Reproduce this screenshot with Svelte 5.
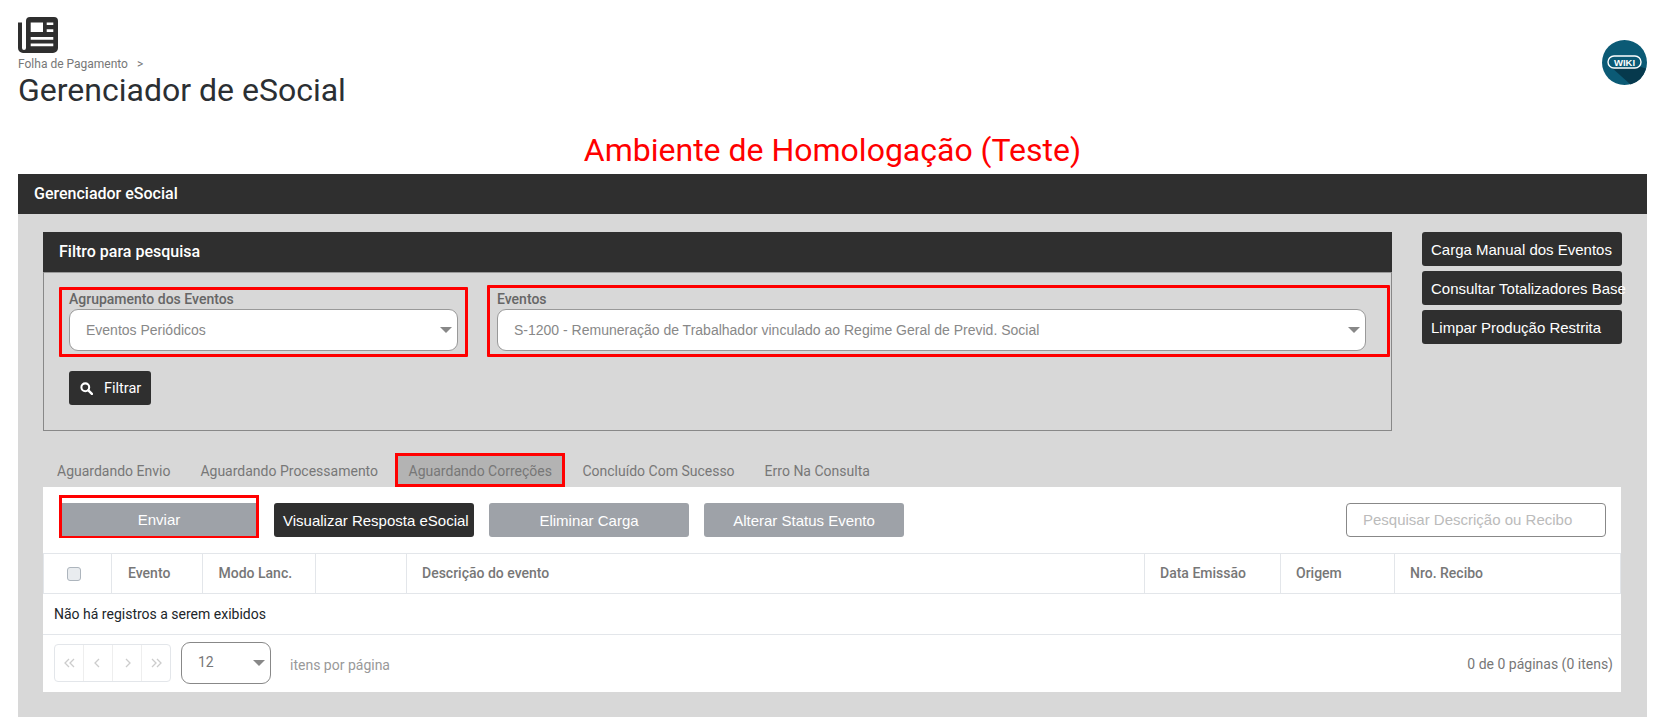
<script>
  const tabs = [
    { label: "Aguardando Envio" },
    { label: "Aguardando Processamento" },
    { label: "Aguardando Correções", active: true },
    { label: "Concluído Com Sucesso" },
    { label: "Erro Na Consulta" },
  ];
  const sideButtons = ["Carga Manual dos Eventos", "Consultar Totalizadores Base", "Limpar Produção Restrita"];
  const columns = [
    { label: "Evento", width: 90.5 },
    { label: "Modo Lanc.", width: 113.5 },
    { label: "", width: 91 },
    { label: "Descrição do evento", width: 738 },
    { label: "Data Emissão", width: 136 },
    { label: "Origem", width: 114 },
    { label: "Nro. Recibo", width: 226 },
  ];
  // chevrons do paginador
  const pager = [
    "M5 1L1 5l4 4M10 1L6 5l4 4",
    "M6 1L2 5l4 4",
    "M4 1l4 4-4 4",
    "M1 1l4 4-4 4M6 1l4 4-4 4",
  ];
</script>

<div class="page">
  <header class="top">
    <div class="heading">
      <svg class="news" viewBox="0 0 40 36" aria-hidden="true">
        <path fill="#2f2f2f" fill-rule="evenodd" d="M8 4a4 4 0 0 1 4-4h24a4 4 0 0 1 4 4v27a5 5 0 0 1-5 5H5a5 5 0 0 1-5-5V5.500h4V31a2 2 0 0 0 4 0z M12.700 5.500V15H25V5.500z M28.700 5.500V8h6.600V5.500z M28.700 12.300V15h6.600v-2.700z M12.700 20v2.700h22.600V20z M12.700 26.500v2.700h22.600v-2.700z" />
      </svg>
      <div class="crumb">Folha de Pagamento <span class="sep">&gt;</span></div>
      <h1>Gerenciador de eSocial</h1>
    </div>
    <svg class="wiki" viewBox="0 0 45 45" aria-label="Wiki">
      <circle cx="22.500" cy="22.500" r="22.500" fill="#0b5a75" />
      <path fill="#06394d" d="M9 27h30l5 1.500a22.500 22.500 0 0 1-15.500 16z" />
      <rect x="6" y="16" width="33" height="12" rx="6" fill="#0b5a75" stroke="#fff" stroke-width="1.400" />
      <text x="22.500" y="25.500" text-anchor="middle">WIKI</text>
    </svg>
  </header>

  <div class="env">Ambiente de Homologação (Teste)</div>

  <section class="main">
    <div class="bar">Gerenciador eSocial</div>
    <div class="main-body">
      <div class="upper">
        <div class="filter">
          <div class="filter-title">Filtro para pesquisa</div>
          <div class="filter-body">
            <div class="fields">
              <div class="field group">
                <span class="label">Agrupamento dos Eventos</span>
                <div class="select">Eventos Periódicos<i class="caret"></i></div>
              </div>
              <div class="field events">
                <span class="label">Eventos</span>
                <div class="select">S-1200 - Remuneração de Trabalhador vinculado ao Regime Geral de Previd. Social<i class="caret"></i></div>
              </div>
            </div>
            <button class="btn-filter">
              <svg viewBox="0 0 14 14" aria-hidden="true">
                <circle cx="5.700" cy="5.700" r="4.200" fill="none" stroke="#fff" stroke-width="2.200" />
                <path d="M9 9l3.800 3.800" stroke="#fff" stroke-width="2.600" stroke-linecap="round" />
              </svg>
              Filtrar
            </button>
          </div>
        </div>
        <div class="side">
          {#each sideButtons as b}
            <button class="btn dark side-btn">{b}</button>
          {/each}
        </div>
      </div>

      <nav class="tabs">
        {#each tabs as t}
          <span class="tab" class:active={t.active}>{t.label}</span>
        {/each}
      </nav>

      <div class="panel">
        <div class="toolbar">
          <div class="send-mark"><button class="btn grey send">Enviar</button></div>
          <button class="btn dark act vis">Visualizar Resposta eSocial</button>
          <button class="btn grey act">Eliminar Carga</button>
          <button class="btn grey act">Alterar Status Evento</button>
          <div class="search">Pesquisar Descrição ou Recibo</div>
        </div>

        <div class="thead">
          <div class="th check"><span class="box"></span></div>
          {#each columns as c}
            <div class="th" style="width: {c.width}px">{c.label}</div>
          {/each}
        </div>
        <div class="empty">Não há registros a serem exibidos</div>

        <div class="pagination">
          <div class="pager">
            {#each pager as d}
              <span>
                <svg viewBox="0 0 11 10" aria-hidden="true"><path d={d} fill="none" stroke="#ccc" stroke-width="1.300" /></svg>
              </span>
            {/each}
          </div>
          <div class="size">12<i class="caret"></i></div>
          <span class="per-page">itens por página</span>
          <span class="count">0 de 0 páginas (0 itens)</span>
        </div>
      </div>
    </div>
  </section>
</div>

<style>
  :global(body) {
    background: #fff;
    font-family: Roboto, sans-serif;
    color: #212529;
  }

  .page {
    padding: 17px 16px 9px 18px;
  }

  .top {
    display: flex;
    justify-content: space-between;
    align-items: flex-start;
    height: 95px;
  }

  .news {
    display: block;
    width: 40px;
    height: 36px;
  }

  .crumb {
    margin-top: 4px;
    font-size: 12px;
    line-height: 15px;
    color: #777;
  }

  .sep {
    margin-left: 6px;
    font-size: 12px;
  }

  h1 {
    margin: -1px 0 0;
    font-size: 32px;
    font-weight: 400;
    line-height: 38px;
    color: #2b2f33;
  }

  .wiki {
    width: 45px;
    height: 45px;
    margin-top: 23px;
  }

  .wiki text {
    font-family: "Liberation Sans", sans-serif;
    font-size: 9.500px;
    font-weight: 700;
    fill: #fff;
  }

  .env {
    box-sizing: border-box;
    height: 62px;
    padding-top: 14px;
    text-align: center;
    font-size: 32px;
    line-height: 48px;
    color: #f00;
  }

  .main {
    background: #d8d8d8;
    height: 543px;
  }

  .bar {
    height: 40px;
    line-height: 40px;
    padding-left: 16px;
    background: #2f2f2f;
    color: #fff;
    font-size: 16px;
    font-weight: 500;
  }

  .main-body {
    padding: 18px 25px 0;
  }

  .upper {
    display: flex;
    gap: 30px;
    height: 198px;
  }

  .filter {
    width: 1349px;
    display: flex;
    flex-direction: column;
  }

  .filter-title {
    height: 40px;
    line-height: 40px;
    padding-left: 16px;
    background: #2f2f2f;
    color: #fff;
    font-size: 16px;
    font-weight: 500;
  }

  .filter-body {
    height: 159px;
    flex: none;
    box-sizing: border-box;
    padding: 12px 0 0 15px;
    border: 1px solid #888;
    border-top-color: #999;
  }

  .fields {
    display: flex;
    gap: 19px;
    align-items: flex-end;
  }

  .field {
    flex: none;
    box-sizing: border-box;
    border: 3px solid #f00;
    padding: 0 7px 3px;
    display: flex;
    flex-direction: column;
    border-radius: 1px;
  }

  .group {
    width: 409px;
    height: 70px;
  }

  .events {
    width: 903px;
    height: 72px;
    padding-right: 21px;
  }

  .label {
    font-size: 14px;
    font-weight: 500;
    line-height: 19px;
    color: #666;
    margin-top: auto;
  }

  .select {
    position: relative;
    box-sizing: border-box;
    height: 42px;
    line-height: 40px;
    padding-left: 16px;
    background: #fff;
    border: 1px solid #999;
    border-radius: 9px;
    font-family: "Liberation Sans", sans-serif;
    font-size: 14px;
    color: #888;
  }

  .caret {
    position: absolute;
    right: 5px;
    top: 17px;
    width: 0;
    height: 0;
    border-left: 6px solid transparent;
    border-right: 6px solid transparent;
    border-top: 6px solid #888;
  }

  button {
    font-family: "Liberation Sans", sans-serif;
    border: 0;
    color: #fff;
    padding: 0;
  }

  .btn-filter {
    display: flex;
    align-items: center;
    gap: 11px;
    width: 82px;
    height: 34px;
    margin: 14px 0 0 10px;
    padding-left: 11px;
    background: #2f2f2f;
    border-radius: 3px;
    font-family: Roboto, sans-serif;
    font-size: 14.500px;
  }

  .btn-filter svg {
    width: 13px;
    height: 13px;
  }

  .side {
    display: flex;
    flex-direction: column;
    gap: 5px;
  }

  .btn {
    height: 34px;
    border-radius: 3px;
    font-size: 15px;
  }

  .dark {
    background: #2f2f2f;
  }

  .grey {
    background: #9ea2a8;
  }

  .side-btn {
    width: 200px;
    padding-left: 9px;
    text-align: left;
    white-space: nowrap;
    overflow: visible;
  }

  .tabs {
    display: flex;
    height: 42px;
    align-items: flex-end;
    margin-top: 15px;
    padding-left: 14px;
    gap: 30px;
  }

  .tab {
    font-size: 14px;
    line-height: 36px;
    height: 34px;
    color: #777;
  }

  .active {
    box-sizing: border-box;
    background: #b3b3b3;
    border: 3px solid #f00;
    line-height: 31px;
    padding: 0 10.500px;
    margin: 0 -13px;
  }

  .panel {
    width: 1578px;
    height: 205px;
    background: #fff;
  }

  .toolbar {
    display: flex;
    align-items: flex-end;
    gap: 15px;
    height: 66px;
    padding: 0 15px 16px 16px;
    box-sizing: border-box;
  }

  .send-mark {
    box-sizing: border-box;
    width: 200px;
    height: 43px;
    border: 3px solid #f00;
    border-bottom-width: 2px;
    margin-bottom: -1px;
  }

  .send {
    width: 100%;
    height: 33px;
    margin-top: 5px;
    display: block;
    border-radius: 0;
  }

  .act {
    width: 200px;
    white-space: nowrap;
  }

  .vis {
    text-align: left;
    padding-left: 9px;
  }

  .search {
    box-sizing: border-box;
    width: 260px;
    height: 34px;
    margin-left: auto;
    padding-left: 16px;
    line-height: 32px;
    border: 1px solid #888;
    border-radius: 4px;
    color: #bbb;
    font-family: "Liberation Sans", sans-serif;
    font-size: 15px;
  }

  .thead {
    display: flex;
    height: 41px;
    box-sizing: border-box;
    border: 1px solid #e3e6ea;
    overflow: hidden;
  }

  .th {
    box-sizing: border-box;
    flex: none;
    padding-left: 15px;
    line-height: 38px;
    font-size: 14px;
    font-weight: 500;
    color: #777;
    border-right: 1px solid #e3e6ea;
  }

  .th:nth-child(2),
  .th:nth-child(3) {
    padding-left: 16px;
  }

  .th:last-child {
    border-right: 0;
  }

  .check {
    width: 68px;
    padding: 0 7px 0 0;
    display: flex;
    align-items: center;
    justify-content: center;
  }

  .box {
    width: 14px;
    height: 14px;
    box-sizing: border-box;
    background: #e9ecef;
    border: 1px solid #adb5bd;
    border-radius: 3px;
  }

  .empty {
    height: 41px;
    box-sizing: border-box;
    padding-left: 11px;
    line-height: 40px;
    font-size: 14px;
    color: #212529;
    border-bottom: 1px solid #e3e6ea;
  }

  .pagination {
    display: flex;
    align-items: center;
    height: 55px;
    padding: 0 8px 0 11px;
  }

  .pager {
    display: flex;
    box-sizing: border-box;
    width: 117px;
    height: 38px;
    border: 1px solid #e3e6ea;
    border-radius: 4px;
  }

  .pager span {
    flex: 1;
    display: flex;
    align-items: center;
    justify-content: center;
    border-right: 1px solid #eee;
  }

  .pager span:last-child {
    border-right: 0;
  }

  .pager svg {
    width: 11px;
    height: 10px;
  }

  .size {
    position: relative;
    box-sizing: border-box;
    width: 90px;
    height: 42px;
    margin-left: 10px;
    padding-left: 16px;
    line-height: 38px;
    border: 1px solid #888;
    border-radius: 9px;
    font-size: 14px;
    color: #777;
  }

  .per-page {
    margin: 4px 0 0 19px;
    font-size: 14px;
    color: #999;
  }

  .count {
    margin: 2px 0 0 auto;
    font-size: 14px;
    color: #777;
  }
</style>
